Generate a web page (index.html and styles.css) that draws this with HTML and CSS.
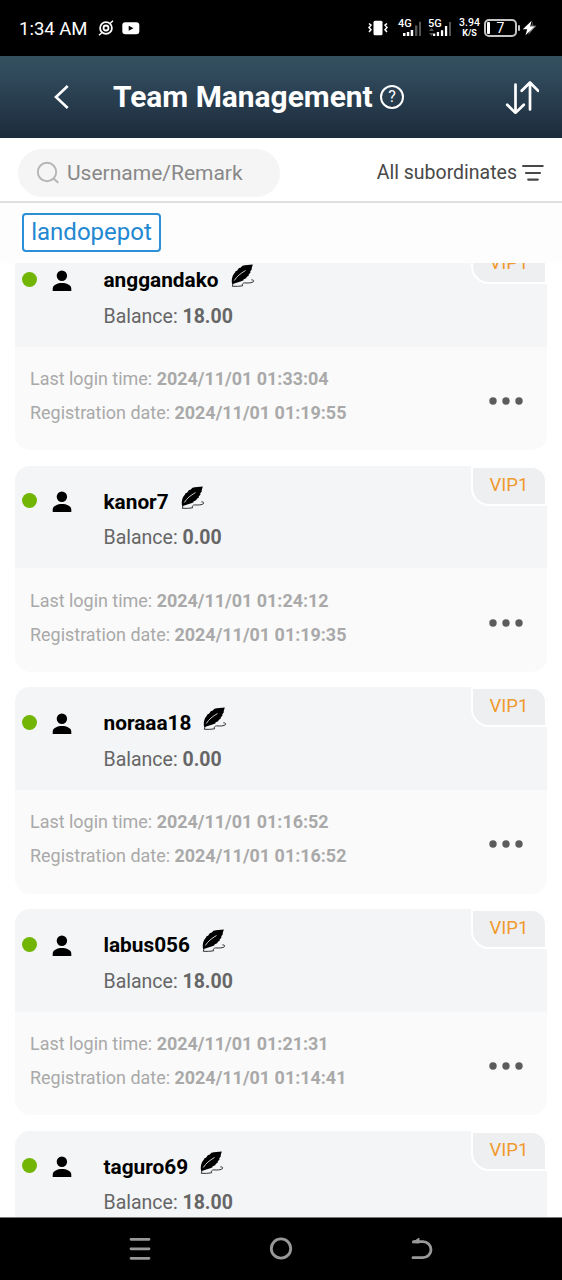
FILE: index.html
```html
<!DOCTYPE html>
<html lang="en">
<head>
<meta charset="utf-8">
<title>Team Management</title>
<link rel="stylesheet" href="styles.css">
</head>
<body>
<svg class="sprite" aria-hidden="true">
  <symbol id="person" viewBox="0 0 20 22"><circle cx="9.9" cy="5.7" r="5.2"/><path d="M.7 21v-2.6c0-3.4 5-5.4 9.3-5.4s9.3 2 9.3 5.4V21z"/></symbol>
  <symbol id="quill" viewBox="0 0 24 24">
    <path d="M1.200 20.300C.2 16 1 11.500 4 8.500L4.500 7.300 6 6.800 8 4 9.500 3.800 11.500 1.800C14.500.9 18 .9 21.800.6L20.600 4.500l.4.600-1.800 2.500.4.700-2 2.400.4.600-2.600 2 .2.700-3.200 1.600.2.600c-3 1.600-6.500 2.300-9.200 3.300z"/>
    <path class="vein" d="M3.300 16.500C6 12.200 9.500 9.500 14.500 6.500"/>
    <path class="tail" d="M2.200 19L1.300 22.300c3.500.3 7 0 10.400-.5-1-1.500 0-2.600 1.800-2.900 3.500.2 7.500.2 9-1.300.7-1.200-.7-2-2.200-1.700"/>
  </symbol>
  <symbol id="dots" viewBox="0 0 34 8"><circle cx="4" cy="4" r="3.700"/><circle cx="17" cy="4" r="3.700"/><circle cx="30" cy="4" r="3.700"/></symbol>
</svg>
<div class="phone">
  <div class="status">
    <span class="clock">1:34 AM</span>
    <svg class="orbit" width="16" height="16" viewBox="0 0 16 16"><circle cx="8" cy="8" r="5.900" class="ring"/><circle cx="8" cy="8" r="2.500" class="ring"/><path class="ring thin" d="M12 3.500L15 .8M4 12.500L1 15.200"/></svg>
    <svg class="video" width="18" height="13" viewBox="0 0 18 13"><rect x=".3" y=".3" width="17" height="12" rx="3" fill="#fff"/><path d="M6.700 3.800v5l4.800-2.500z"/></svg>
    <span class="fill"></span>
    <svg class="vibrate" width="20" height="16" viewBox="0 0 20 16"><rect x="5.500" y=".8" width="9" height="14.500" rx="1.500" fill="#fff"/><path class="ring wave" d="M1 3.500l2 1.700-2 2.300 2 2.300-2 2.200M19 3.500l-2 1.700 2 2.300-2 2.300 2 2.200"/></svg>
    <div class="signal">
      <span>4G</span>
      <svg width="20" height="16" viewBox="0 0 20 16"><g fill="#fff"><path d="M1 12h2.500v3H1zM4.800 11h2.500v4H4.800zM8.700 9h2.500v6H8.700z"/></g><g fill="#555"><path d="M13 4.500h2.400V15H13zM17 .8h2V15h-2z"/></g></svg>
    </div>
    <div class="signal second">
      <span>5G</span>
      <svg width="20" height="16" viewBox="0 0 20 16"><g fill="#fff"><path d="M1 12.500h2.300V15H1zM4.800 11h2.300v4H4.800zM8.900 9.200h2.300V15H8.900zM12.900 5h2.300v10h-2.300z"/></g><path fill="#555" d="M17 1h2v14h-2z"/></svg>
      <svg class="traffic" width="5" height="8" viewBox="0 0 5 8"><path fill="#555" d="M2.500 0L5 3H0zM2.500 8L5 5H0z"/></svg>
    </div>
    <div class="speed"><span>3.94</span><span>K/S</span></div>
    <div class="battery"><i></i><span>7</span></div>
    <svg class="bolt" width="15" height="16" viewBox="0 0 15 16"><path fill="#777" d="M11 1L6 15l8.500-9.300-4-.2z"/><path fill="#fff" d="M9.600.7L.8 9.300h4.400L3.500 15.200 12.500 6.400H8.200z"/></svg>
  </div>
  <header class="header">
    <svg class="back" width="18" height="28" viewBox="0 0 18 28"><path d="M16.700 3L5 14l11.700 11"/></svg>
    <h1>Team Management</h1>
    <div class="help"><span>?</span></div>
    <svg class="sort" width="34" height="34" viewBox="0 0 34 34"><path d="M10.500 4.500v28M2.200 24.700l8.300 8.200 8.300-8.200M25 29.500V2.500M16.700 10.800L25 2.500l8.200 8.300"/></svg>
  </header>
  <div class="filters">
    <div class="search">
      <svg width="24" height="24" viewBox="0 0 24 24"><circle cx="11" cy="11" r="9.200"/><path d="M17.500 17.500l4.800 4.300"/></svg>
      <span>Username/Remark</span>
    </div>
    <span class="all">All subordinates</span>
    <svg class="funnel" width="22" height="18" viewBox="0 0 22 18"><path d="M1.100 2h19.600M4 9h14M6.200 15.600h9.600"/></svg>
  </div>
  <div class="crumbs"><span>landopepot</span></div>
  <main class="list">
    <section class="card">
      <div class="top"><i class="online"></i><svg class="person"><use href="#person"/></svg><div class="who"><div class="name"><b>anggandako</b><svg class="quill"><use href="#quill"/></svg></div><div class="balance">Balance: <b>18.00</b></div></div><span class="vip">VIP1</span></div>
      <div class="bottom"><div><p class="login">Last login time: <b>2024/11/01 01:33:04</b></p><p class="reg">Registration date: <b>2024/11/01 01:19:55</b></p></div><svg class="dots"><use href="#dots"/></svg></div>
    </section>
    <section class="card">
      <div class="top"><i class="online"></i><svg class="person"><use href="#person"/></svg><div class="who"><div class="name"><b>kanor7</b><svg class="quill"><use href="#quill"/></svg></div><div class="balance">Balance: <b>0.00</b></div></div><span class="vip">VIP1</span></div>
      <div class="bottom"><div><p class="login">Last login time: <b>2024/11/01 01:24:12</b></p><p class="reg">Registration date: <b>2024/11/01 01:19:35</b></p></div><svg class="dots"><use href="#dots"/></svg></div>
    </section>
    <section class="card">
      <div class="top"><i class="online"></i><svg class="person"><use href="#person"/></svg><div class="who"><div class="name"><b>noraaa18</b><svg class="quill"><use href="#quill"/></svg></div><div class="balance">Balance: <b>0.00</b></div></div><span class="vip">VIP1</span></div>
      <div class="bottom"><div><p class="login">Last login time: <b>2024/11/01 01:16:52</b></p><p class="reg">Registration date: <b>2024/11/01 01:16:52</b></p></div><svg class="dots"><use href="#dots"/></svg></div>
    </section>
    <section class="card">
      <div class="top"><i class="online"></i><svg class="person"><use href="#person"/></svg><div class="who"><div class="name"><b>labus056</b><svg class="quill"><use href="#quill"/></svg></div><div class="balance">Balance: <b>18.00</b></div></div><span class="vip">VIP1</span></div>
      <div class="bottom"><div><p class="login">Last login time: <b>2024/11/01 01:21:31</b></p><p class="reg">Registration date: <b>2024/11/01 01:14:41</b></p></div><svg class="dots"><use href="#dots"/></svg></div>
    </section>
    <section class="card">
      <div class="top"><i class="online"></i><svg class="person"><use href="#person"/></svg><div class="who"><div class="name"><b>taguro69</b><svg class="quill"><use href="#quill"/></svg></div><div class="balance">Balance: <b>18.00</b></div></div><span class="vip">VIP1</span></div>
    </section>
  </main>
  <nav class="nav">
    <svg width="24" height="26" viewBox="0 0 24 26"><path d="M3 3.300h18M3 12.800h18M3 22.300h18"/></svg>
    <svg width="24" height="26" viewBox="0 0 24 26"><circle cx="12" cy="12.500" r="9.700"/></svg>
    <svg width="24" height="26" viewBox="0 0 24 26"><path d="M3.500 5.700H13a8 8 0 0 1 0 16H3"/><path class="tip" d="M2.300 6.500L9 2.200v4.500z"/></svg>
  </nav>
</div>
</body>
</html>
```
FILE: styles.css
```css
* { box-sizing: border-box; }
body { margin: 0; background: #fff; font-family: Roboto, "Liberation Sans", sans-serif; }
p, h1 { margin: 0; }
svg { display: block; flex: none; }
.sprite { width: 0; height: 0; position: absolute; }
.phone { width: 562px; height: 1280px; display: flex; flex-direction: column; overflow: hidden; }

.status { height: 56px; flex: none; background: #000; color: #fff; display: flex; align-items: center; padding: 0 25px 0 19px; }
.clock { font-size: 18.500px; line-height: 24px; width: 79px; margin-top: 2px; white-space: nowrap; }
.ring { fill: none; stroke: #fff; stroke-width: 1.8; }
.thin { stroke-width: 1.4; }
.wave { stroke-width: 1.5; }
.video { margin-left: 8px; }
.fill { flex: 1; }
.vibrate { margin-right: 10px; }
.signal { width: 24px; height: 18px; position: relative; margin-right: 6px; display: flex; align-items: flex-end; justify-content: flex-end; }
.signal > span { position: absolute; left: 0; top: -1px; font-size: 11px; line-height: 11px; font-weight: 500; z-index: 1; }
.signal .traffic { position: absolute; left: 1px; bottom: 1px; }
.speed { width: 21px; margin: 0 4px 0 1px; display: flex; flex-direction: column; align-items: center; font-size: 10.5px; line-height: 10px; font-weight: 500; }
.speed span:last-child { font-size: 9px; font-weight: 700; line-height: 10px; }
.battery { width: 33px; height: 18px; border: 2px solid #c4c4c4; border-radius: 5px; position: relative; display: flex; align-items: center; justify-content: center; font-size: 14px; line-height: 14px; }
.battery i { position: absolute; left: 1px; top: 1px; width: 3px; height: 12px; background: #fff; border-radius: 1px; }
.battery::after { content: ""; position: absolute; right: -5px; top: 4px; width: 2px; height: 6px; background: #c4c4c4; border-radius: 1px; }
.bolt { margin-left: 5px; }

.header { height: 82px; flex: none; background: linear-gradient(#34505f, #304a5c 22%, #1c2b3c); display: flex; align-items: center; color: #fff; padding: 0 23px 0 51px; }
.back { fill: none; stroke: #fff; stroke-width: 2.6; }
.header h1 { width: 259px; margin: -1px 8px 0 44px; font-size: 29.900px; font-weight: 700; line-height: 36px; white-space: nowrap; }
.help { width: 24px; height: 24px; border: 2px solid #fff; border-radius: 50%; display: flex; align-items: center; justify-content: center; font-size: 16px; line-height: 20px; margin-right: auto; }
.sort { fill: none; stroke: #fff; stroke-width: 2.7; stroke-linecap: round; stroke-linejoin: round; }

.filters { height: 65px; flex: none; border-bottom: 2px solid #dfdfdf; display: flex; align-items: center; padding: 5px 18px 0 18px; }
.search { width: 262px; height: 48px; border-radius: 24px; background: #f5f5f5; display: flex; align-items: center; padding-left: 18px; margin-top: 1px; color: #888; font-size: 21px; line-height: 26px; }
.search svg { fill: none; stroke: #b5b5b5; stroke-width: 1.9; margin-right: 7px; }
.all { margin-left: auto; margin-top: 2px; margin-right: 5px; font-size: 19.5px; color: #484848; white-space: nowrap; line-height: 26px; }
.funnel { stroke: #484848; stroke-width: 2.2; stroke-linecap: round; margin-top: 2px; }

.crumbs { height: 60px; flex: none; background: #fdfdfd; padding: 10px 22px; display: flex; }
.crumbs span { height: 39px; width: 139px; border: 2px solid #2b90d5; border-radius: 4px; background: #fff; color: #2388d2; font-size: 24px; line-height: 34px; text-align: center; }

.list { flex: 1; min-height: 0; overflow: hidden; display: flex; flex-direction: column; gap: 15.500px; padding: 0 15px; justify-content: flex-end; }
.card { flex: none; height: 206.200px; border-radius: 15px; overflow: hidden; background: #fafafa; }
.card:last-child { height: 86.200px; border-radius: 15px 15px 0 0; }
.top { height: 102.500px; background: #f3f5f7; position: relative; display: flex; align-items: flex-start; }
.online { width: 15px; height: 15px; border-radius: 50%; background: #73b504; margin: 27.500px 0 0 7.300px; }
.person { width: 20px; height: 22px; margin: 25.500px 0 0 14.700px; }
.who { margin: 23px 0 0 31.500px; }
.name { display: flex; height: 26px; font-size: 20.800px; line-height: 26px; }
.name b { font-weight: 700; }
.quill { width: 24px; height: 24px; margin: -3px 0 0 12px; }
.vein { fill: none; stroke: #fff; stroke-width: .8; }
.tail { fill: none; stroke: #333; stroke-width: 1; }
.balance { font-size: 19.500px; line-height: 26px; margin-top: 10.500px; color: #666; }
.balance b { font-weight: 700; }
.vip { position: absolute; right: 0; top: 0; width: 76px; height: 40px; border: 2.500px solid #fff; border-radius: 0 15px 0 18px; background: #eeeff1; color: #f09a2d; font-size: 18.500px; line-height: 34.500px; text-align: center; }
.bottom { height: 103.700px; display: flex; justify-content: space-between; padding: 20.300px 24px 0 15px; font-size: 17.950px; line-height: 24px; color: #a9a9a9; white-space: nowrap; }
.reg { margin-top: 10px; }
.bottom b { font-weight: 700; }
.dots { width: 34px; height: 8px; margin-top: 30px; fill: #5c5c5c; }

.nav { height: 63px; flex: none; background: #000; border-top: 1px solid #777; display: flex; justify-content: center; align-items: center; gap: 117px; }
.nav svg { fill: none; stroke: #999; stroke-width: 2.800; stroke-linecap: round; }
.nav .tip { fill: #999; stroke-width: 1; stroke-linejoin: round; }
```
